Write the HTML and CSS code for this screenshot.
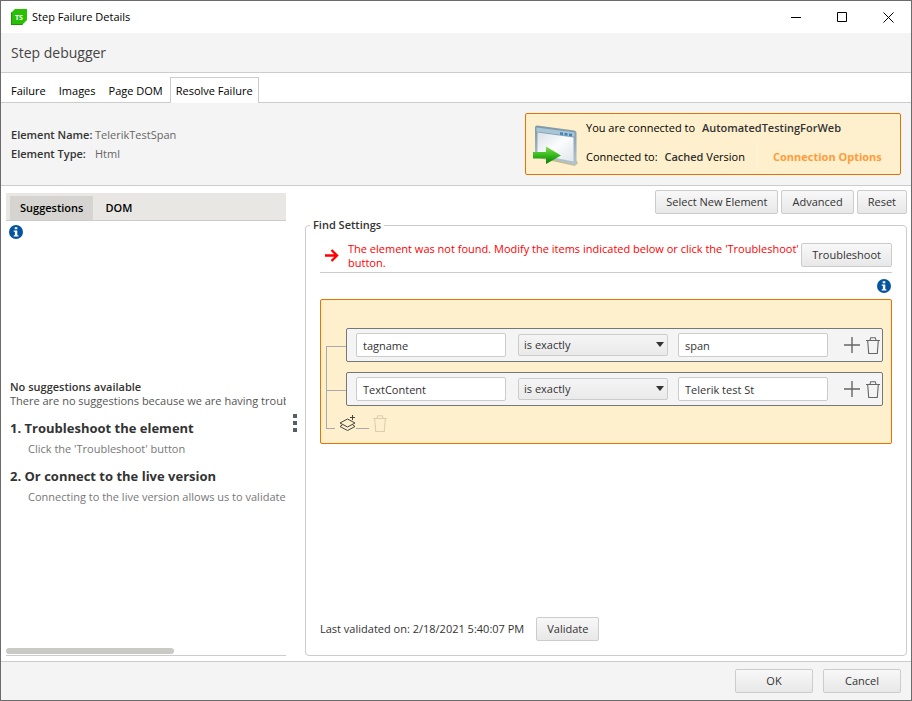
FILE: index.html
```
<!DOCTYPE html>
<html lang="en">

<head>
	<meta charset="utf-8">
	<title>Step Failure Details</title>
	<link rel="stylesheet" href="styles.css">
</head>

<body>

	<!-- shared icons -->
	<svg class="defs" width="0" height="0">
		<symbol id="info" viewBox="0 0 14 14">
			<circle cx="7" cy="7" r="7" fill="#04549f" />
			<path d="M5.7 2.2h2.6v2.1H5.7zM4.7 5.4h3.6v4.8h1.1v1.4H4.7v-1.4h1.2V6.8H4.7z" fill="#fff" />
		</symbol>
		<symbol id="plus" viewBox="0 0 16 16">
			<path d="M8 0v16M0 8h16" stroke="#666" stroke-width="1.4" fill="none" />
		</symbol>
		<symbol id="trash" viewBox="0 0 14 17">
			<path d="M0 3.5h14M4 3.2l.8-2.5h4.4l.8 2.5M1.7 3.8l1 12.7h8.6l1-12.7" stroke="currentColor" stroke-width="1.1" fill="none" />
		</symbol>
	</svg>

	<div class="window">
		<header class="titlebar">
			<svg class="logo" width="16" height="16" viewBox="0 0 16 16">
				<path d="M4 0h12v11l-5 5H0V4z" fill="#28c003" />
				<path d="M0 4v12h11l1-1H1V3z" fill="#1d9108" />
				<text x="8" y="11" text-anchor="middle">TS</text>
			</svg>
			<h1>Step Failure Details</h1>
			<div class="winbtns">
				<button type="button" aria-label="Minimize"><svg width="11" height="11"><path d="M0 5.500h10" /></svg></button>
				<button type="button" aria-label="Maximize"><svg width="11" height="11"><path d="M.5.5h9v9h-9z" /></svg></button>
				<button type="button" aria-label="Close"><svg width="11" height="11"><path d="M.5.5l10 10M10.500.5l-10 10" /></svg></button>
			</div>
		</header>

		<h2 class="heading">Step debugger</h2>

		<nav class="tabs">
			<button type="button">Failure</button>
			<button type="button">Images</button>
			<button type="button">Page DOM</button>
			<button type="button" class="active">Resolve Failure</button>
		</nav>

		<section class="summary">
			<dl>
				<dt>Element Name:</dt>
				<dd>TelerikTestSpan</dd>
				<dt>Element Type:</dt>
				<dd>Html</dd>
			</dl>
			<div class="connect">
				<svg width="46" height="44" viewBox="0 0 46 44">
					<defs>
						<linearGradient id="glass" x1="0" y1="0" x2="1" y2="1">
							<stop offset="0" stop-color="#d9e2e8" />
							<stop offset=".5" stop-color="#fbfcfd" />
							<stop offset="1" stop-color="#dfe6ea" />
						</linearGradient>
						<linearGradient id="frame" x1="0" y1="0" x2="0" y2="1">
							<stop offset="0" stop-color="#7d98a6" />
							<stop offset="1" stop-color="#b4c6cf" />
						</linearGradient>
						<linearGradient id="arrow" x1="0" y1="0" x2="0" y2="1">
							<stop offset="0" stop-color="#7ede4c" />
							<stop offset=".5" stop-color="#38b91c" />
							<stop offset="1" stop-color="#0a7a0a" />
						</linearGradient>
					</defs>
					<path d="M5 34l37 8 3-3-2-3z" fill="#c9b98c" />
					<path d="M4 1.500q-2 0-2 2V31l40 10q1.500 0 1.500-2V9q0-2-2-2.500z" fill="url(#frame)" />
					<path d="M3.500 3.500l38 5v4l-38-5z" fill="#a9c6d8" />
					<path d="M4.500 8.500l36 5v24l-36-7z" fill="url(#glass)" />
					<path d="M27 8.200l3 .4v2.500l-3-.4zM31.500 8.800l3 .4v2.500l-3-.4zM36 9.400l3 .4v2.500l-3-.4z" fill="#3c85b8" />
					<path d="M0 28h13v-5.500L28 31.500 13 40v-5.500H0z" fill="url(#arrow)" />
				</svg>
				<div class="connect-text">
					<p class="connect-name">You are connected to <b>AutomatedTestingForWeb</b></p>
					<p>Connected to: <b>Cached</b> Version</p>
					<a href="#">Connection Options</a>
				</div>
			</div>
		</section>

		<main>
			<aside class="side">
				<div class="side-tabs">
					<button type="button" class="active">Suggestions</button>
					<button type="button">DOM</button>
				</div>
				<svg class="side-info" width="14" height="14"><use href="#info" /></svg>
				<div class="suggest">
					<h3>No suggestions available</h3>
					<p>There are no suggestions because we are having trouble</p>
					<h4>1. Troubleshoot the element</h4>
					<p class="sub">Click the 'Troubleshoot' button</p>
					<h4>2. Or connect to the live version</h4>
					<p class="sub">Connecting to the live version allows us to validate</p>
				</div>
				<div class="scroll"></div>
			</aside>

			<div class="splitter"><i></i><i></i><i></i></div>

			<div class="content">
				<div class="toolbar">
					<button type="button" class="btn">Select New Element</button>
					<button type="button" class="btn">Advanced</button>
					<button type="button" class="btn">Reset</button>
				</div>

				<fieldset class="find">
					<legend>Find Settings</legend>
					<div class="error">
						<svg width="14" height="13" viewBox="0 0 14 13"><path d="M0 6.500h12M6.500 1l5.500 5.500L6.500 12" stroke="#f00" stroke-width="2.400" fill="none" /></svg>
						<p>The element was not found. Modify the items indicated below or click the 'Troubleshoot' button.</p>
						<button type="button" class="btn">Troubleshoot</button>
					</div>
					<svg class="find-info" width="14" height="14"><use href="#info" /></svg>

					<ul class="tree">
						<li>
							<span class="branch"></span>
							<div class="rule">
								<input type="text" value="tagname" aria-label="Attribute">
								<span class="pick"><select aria-label="Comparison"><option>is exactly</option></select></span>
								<input type="text" value="span" aria-label="Value">
								<button type="button" class="ico add" aria-label="Add"><svg width="16" height="16"><use href="#plus" /></svg></button>
								<button type="button" class="ico" aria-label="Delete"><svg width="14" height="17"><use href="#trash" /></svg></button>
							</div>
						</li>
						<li>
							<span class="branch"></span>
							<div class="rule">
								<input type="text" value="TextContent" aria-label="Attribute">
								<span class="pick"><select aria-label="Comparison"><option>is exactly</option></select></span>
								<input type="text" value="Telerik test St" aria-label="Value">
								<button type="button" class="ico add" aria-label="Add"><svg width="16" height="16"><use href="#plus" /></svg></button>
								<button type="button" class="ico" aria-label="Delete"><svg width="14" height="17"><use href="#trash" /></svg></button>
							</div>
						</li>
						<li class="last">
							<span class="branch"></span>
							<button type="button" class="ico" aria-label="Add group">
								<svg width="17" height="17" viewBox="0 0 17 17"><path d="M8.500 4L16 8l-7.500 4L1 8zM3.500 9.700L1 11.500l7.500 4 7.500-4-2.500-1.800M13.500 0v5M11 2.500h5" stroke="#444" fill="none" /></svg>
							</button>
							<span class="dash"></span>
							<button type="button" class="ico" aria-label="Delete group" disabled><svg width="14" height="17"><use href="#trash" /></svg></button>
						</li>
					</ul>

					<div class="validate">
						<span>Last validated on: 2/18/2021 5:40:07 PM</span>
						<button type="button" class="btn">Validate</button>
					</div>
				</fieldset>
			</div>
		</main>

		<footer>
			<button type="button" class="btn">OK</button>
			<button type="button" class="btn">Cancel</button>
		</footer>
	</div>

</body>

</html>
```
FILE: styles.css
```
* {
	box-sizing: border-box;
}

body,
h1,
h2,
h3,
h4,
p,
ul,
dl,
dd {
	margin: 0;
	padding: 0;
}

body,
button,
input,
select {
	font-family: "Open Sans", "Noto Sans", sans-serif;
	font-size: 11px;
	line-height: 16px;
	color: #333;
}

button {
	padding: 0;
	border: none;
	background: none;
}

svg {
	display: block;
	flex: none;
}

.defs {
	position: absolute;
}

.window {
	display: flex;
	flex-direction: column;
	min-height: 100vh;
	border: 1px solid #6b6b6b;
	background: #fff;
}

/* title bar */
.titlebar {
	display: flex;
	align-items: center;
	height: 32px;
	padding-left: 10px;
}

.logo text {
	font: bold 7px "Open Sans", sans-serif;
	fill: #fff;
}

.titlebar h1 {
	flex: 1;
	margin-left: 5px;
	font-size: 11px;
	font-weight: normal;
	color: #000;
}

.winbtns {
	display: flex;
}

.winbtns button {
	display: flex;
	align-items: center;
	justify-content: center;
	width: 46px;
	height: 32px;
}

.winbtns path {
	fill: none;
	stroke: #000;
}

.heading {
	height: 40px;
	padding-left: 10px;
	border-bottom: 1px solid #ccc;
	background: #f4f4f4;
	font-size: 14px;
	font-weight: normal;
	line-height: 40px;
	color: #444;
}

/* main tabs */
.tabs {
	display: flex;
	align-items: flex-end;
	gap: 1px;
	height: 30px;
	padding-left: 4px;
	border-bottom: 1px solid #ccc;
}

.tabs button {
	height: 26px;
	margin-bottom: -1px;
	padding: 0 5px;
	border: 1px solid transparent;
	border-bottom: none;
	color: #000;
}

.tabs .active {
	border-color: #ccc;
	background: #fff;
}

/* element summary */
.summary {
	display: flex;
	justify-content: space-between;
	align-items: flex-start;
	height: 83px;
	padding: 10px 10px 0;
	border-bottom: 1px solid #ccc;
	background: #f4f4f4;
}

.summary dl {
	display: grid;
	grid-template-columns: 84px auto;
	grid-auto-rows: 19px;
	margin-top: 14px;
	white-space: nowrap;
}

.summary dt {
	font-weight: 600;
}

.summary dd {
	color: #666;
}

.connect {
	display: flex;
	width: 376px;
	height: 62px;
	padding: 10px 7px 0;
	border: 1px solid #e67300;
	border-radius: 2px;
	background: #fef0cd;
}

.connect-text {
	display: grid;
	flex: 1;
	grid-template-columns: 171px 1fr;
	grid-template-rows: 21px 30px;
	margin: -4px 0 0 7px;
	color: #000;
}

.connect-name {
	grid-column: 1 / 3;
}

.connect b {
	margin-left: 4px;
	font-weight: 600;
	color: #333;
}

.connect-text p + p,
.connect a {
	padding-top: 8px;
}

.connect a {
	padding-left: 15px;
	border-left: 1px solid #faf3e2;
	font-weight: bold;
	text-decoration: none;
	color: #ff9c3c;
}

/* work area */
main {
	display: flex;
	flex: 1;
	padding: 4px 4px 5px 5px;
}

.side {
	display: flex;
	flex-direction: column;
	width: 280px;
	margin-top: 3px;
	border-bottom: 1px solid #ccc;
	overflow: hidden;
}

.side-tabs {
	display: flex;
	align-items: flex-end;
	height: 28px;
	padding-left: 4px;
	border-bottom: 1px solid #ccc;
	background: #e8e7e3;
}

.side-tabs button {
	height: 24px;
	padding: 0 10px;
	font-weight: 600;
	color: #000;
}

.side-tabs .active {
	margin-right: 2px;
	background: #d5d4d0;
}

.side-info {
	margin: 4px 3px;
}

.suggest {
	flex: 1;
	display: flex;
	flex-direction: column;
	justify-content: center;
	padding: 0 0 7px 4px;
	line-height: 14px;
	white-space: nowrap;
}

.suggest h3 {
	font-size: 11px;
	font-weight: 600;
}

.suggest p {
	color: #555;
}

.suggest h4 {
	margin-top: 10px;
	font-size: 13px;
	line-height: 20px;
}

.suggest .sub {
	margin: 4px 0 0 18px;
	color: #777;
}

.scroll {
	width: 60%;
	height: 6px;
	margin-bottom: 1px;
	border-radius: 3px;
	background: #c9c9c6;
}

.splitter {
	display: flex;
	flex-direction: column;
	align-items: center;
	justify-content: center;
	gap: 3px;
	width: 19px;
	padding-right: 2px;
}

.splitter i {
	width: 4px;
	height: 4px;
	background: #555f69;
}

.content {
	display: flex;
	flex: 1;
	flex-direction: column;
}

.toolbar {
	display: flex;
	justify-content: flex-end;
	gap: 3px;
}

.btn {
	height: 24px;
	padding: 0 10px;
	border: 1px solid #ccc;
	border-radius: 2px;
	background: linear-gradient(#f8f8f8, #e8e8e8);
}

.find {
	display: flex;
	flex: 1;
	flex-direction: column;
	margin: 3px 0 0;
	padding: 9px 14px 14px;
	border: 1px solid #ccc;
	border-radius: 4px;
}

.find legend {
	margin-left: -10px;
	padding: 0 3px;
	font-weight: 600;
}

.error {
	display: flex;
	align-items: center;
	height: 31px;
	padding: 0 0 4px 5px;
	border-bottom: 1px solid #ccc;
}

.error p {
	flex: 1;
	margin-left: 9px;
	padding-top: 2px;
	line-height: 14px;
	color: #f00;
}

.find-info {
	align-self: flex-end;
	margin: 6px 1px;
}

/* rule tree */
.tree {
	padding: 28px 8px 11px 5px;
	border: 1px solid #e67300;
	border-radius: 2px;
	background: #fef0cd;
	list-style: none;
}

.tree li {
	display: flex;
	min-height: 44px;
}

.branch {
	display: flex;
	flex-direction: column;
	width: 20px;
}

.branch::before,
.branch::after {
	content: "";
	border-left: 1px solid #aaa;
}

.branch::before {
	height: 18px;
	border-bottom: 1px solid #aaa;
}

.branch::after {
	flex: 1;
}

.tree li:first-child .branch::before {
	border-left: none;
}

.tree li:nth-child(2) {
	min-height: 42px;
}

.rule {
	display: flex;
	flex: 1;
	align-items: center;
	height: 34px;
	padding: 0 2px 0 9px;
	border: 1px solid #777;
	border-radius: 2px;
	background: #f4f4f4;
}

.rule input {
	width: 150px;
	height: 24px;
	padding: 0 6px;
	border: 1px solid #ccc;
	border-radius: 2px;
	background: #fff;
}

.pick {
	position: relative;
	margin: 0 10px 0 12px;
}

.pick select {
	display: block;
	width: 150px;
	height: 22px;
	padding: 0 5px;
	border: 1px solid #ccc;
	border-radius: 2px;
	background: linear-gradient(#f4f4f4, #eaeaea);
	appearance: none;
}

.pick::after {
	content: "";
	position: absolute;
	top: 8px;
	right: 4px;
	border: 4px solid transparent;
	border-top: 5px solid #333;
	border-bottom: none;
	pointer-events: none;
}

.ico {
	color: #666;
}

.ico:disabled {
	color: #ddcfae;
}

.add {
	margin: 0 6px 0 auto;
}

.tree .last {
	min-height: 17px;
	align-items: flex-end;
}

.last .branch {
	width: 9px;
	margin: 0 4px 3px 0;
}

.last .branch::before {
	height: 14px;
}

.last .branch::after {
	content: none;
}

.dash {
	width: 13px;
	margin: 0 4px 3px 0;
	border-bottom: 1px solid #aaa;
}

.validate {
	display: flex;
	align-items: center;
	gap: 12px;
	margin-top: auto;
}

/* dialog buttons */
footer {
	display: flex;
	justify-content: flex-end;
	gap: 10px;
	padding: 7px 10px;
	border-top: 1px solid #ccc;
	background: #f4f4f4;
}

footer .btn {
	width: 78px;
}
```
